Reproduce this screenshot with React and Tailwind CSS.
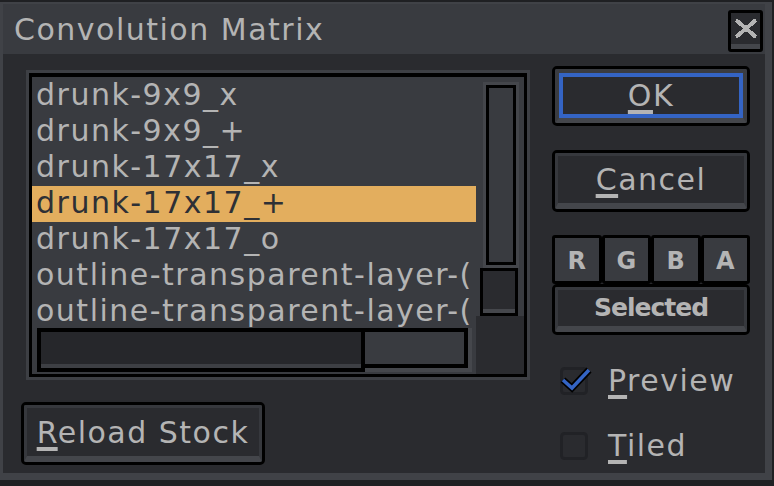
import React from 'react';

const items = [
  'drunk-9x9_x',
  'drunk-9x9_+',
  'drunk-17x17_x',
  'drunk-17x17_+',
  'drunk-17x17_o',
  'outline-transparent-layer-(',
  'outline-transparent-layer-(',
];

// first letter underline (mnemonic)
function U({ children }) {
  return <span className="underline decoration-[4px] underline-offset-[4px]">{children}</span>;
}

function Btn({ className = '', children }) {
  return (
    <div className={`rounded-[5px] border-[3px] border-black ${className}`}>
      <div className="flex h-full items-center justify-center rounded-[2px] border-[3px] border-b-[6px] border-[#36383d] border-b-[#44464b] bg-[#2a2b2f]">
        {children}
      </div>
    </div>
  );
}

function Channel({ label }) {
  return (
    <div className="flex-1 rounded-[3px] border-[3px] border-black bg-[#393b40] flex items-center justify-center">
      <span className="text-[24px] font-bold tracking-normal pt-[3px] leading-none">{label}</span>
    </div>
  );
}

function Check({ checked }) {
  return (
    <svg width="32" height="28" viewBox="0 0 32 28" className="shrink-0">
      <rect x="1.5" y="1.5" width="25" height="25" rx="3" fill="none" stroke="#212226" strokeWidth="3" />
      {checked && (
        <>
          <polyline points="3,13 12,21 29,3" fill="none" stroke="#000" strokeWidth="7" strokeLinejoin="miter" />
          <polyline points="3,13 12,21 29,3" fill="none" stroke="#3464c4" strokeWidth="3.5" strokeLinejoin="miter" />
        </>
      )}
    </svg>
  );
}

export default function App() {
  return (
    <div className="w-[774px] h-[486px] bg-[#1f2023] pt-[2px] pr-[2px] pb-[6px] font-['DejaVu_Sans',sans-serif] text-[30px] tracking-[1.5px] text-[#b4b4b4]">
      <div className="h-full flex flex-col border-l-[3px] border-r-[7px] border-b-[7px] border-t-[2px] border-[#404247] bg-[#2a2b2f]">
        {/* title bar */}
        <div className="h-[50px] shrink-0 bg-[#393b40] flex justify-between pl-[11px] pr-[2px]">
          <div className="self-center leading-none pt-[2px]">Convolution Matrix</div>
          <div className="mt-[6px] w-[35px] h-[42px] rounded-[3px] border-[3px] border-black">
            <div className="h-full flex items-center justify-center border-b-[5px] border-[#44464b] bg-[#2a2b2f]">
              <svg width="22" height="19" viewBox="0 0 22 19" shapeRendering="crispEdges">
                <path d="M1 1 L21 18 M21 1 L1 18" stroke="#b4b4b4" strokeWidth="4" />
              </svg>
            </div>
          </div>
        </div>

        {/* body */}
        <div className="flex flex-1 pl-[18px]">
          {/* left column */}
          <div className="w-[509px] flex flex-col">
            <div className="ml-[5px] mt-[16px] w-[504px] h-[310px] border-[3px] border-[#3d3f44]">
              <div className="h-full flex border-[3px] border-t-[4px] border-black bg-[#393b40]">
                <div className="w-[444px] flex flex-col">
                  <div className="h-[250px] overflow-x-clip pt-px">
                    {items.map((t, i) => (
                      <div
                        key={i}
                        className={`h-[36px] leading-[34px] pl-[4px] whitespace-nowrap ${i === 3 ? 'bg-[#e3ae5e] text-[#2e3035]' : ''}`}
                      >
                        {t}
                      </div>
                    ))}
                  </div>
                  <div className="flex-1 flex pl-[5px] pr-[4px] pt-px pb-[2px]">
                    <div className="w-[328px] border-[4px] border-black bg-[#26272b]">
                      <div className="h-full border-b-[4px] border-[#3d3f44]" />
                    </div>
                    <div className="flex-1 border-r-[4px] border-b-[4px] border-[#45474c]">
                      <div className="h-full border-[4px] border-l-0 border-black bg-[#393b40]" />
                    </div>
                  </div>
                </div>
                <div className="flex-1 flex flex-col">
                  <div className="ml-[7px] mt-[5px] w-[36px] h-[186px] border-[3px] border-[#44464b]">
                    <div className="h-full border-[3px] border-black bg-[#393b40]" />
                  </div>
                  <div className="ml-[4px] w-[38px] h-[48px] border-[3px] border-black bg-[#2a2b2f]">
                    <div className="h-full border-b-[4px] border-[#45474c]" />
                  </div>
                  <div className="flex-1 bg-[#2a2b2f]" />
                </div>
              </div>
            </div>
            <Btn className="mt-[22px] w-[244px] h-[63px]">
              <span><U>R</U>eload Stock</span>
            </Btn>
          </div>

          {/* right column */}
          <div className="ml-[22px] w-[198px] flex flex-col">
            <div className="mt-[12px] h-[60px] rounded-[5px] border-[3px] border-black">
              <div className="h-full rounded-[2px] border-[4px] border-b-[5px] border-[#3a3c41] border-b-[#44464b]">
                <div className="h-full flex items-center justify-center border-[4px] border-[#3464c4] bg-[#2a2b2f]">
                  <span><U>O</U>K</span>
                </div>
              </div>
            </div>
            <Btn className="mt-[24px] h-[62px]">
              <span><U>C</U>ancel</span>
            </Btn>
            <div className="mt-[23px] h-[49px] flex">
              <Channel label="R" />
              <Channel label="G" />
              <Channel label="B" />
              <Channel label="A" />
            </div>
            <Btn className="h-[51px]">
              <span className="text-[25px] font-bold tracking-[-1px]">Selected</span>
            </Btn>
            <div className="mt-[28px] h-[35px] flex items-center pl-[8px] gap-[16px]">
              <Check checked />
              <span><U>P</U>review</span>
            </div>
            <div className="mt-[30px] h-[35px] flex items-center pl-[8px] gap-[16px]">
              <Check />
              <span><U>T</U>iled</span>
            </div>
          </div>
        </div>
      </div>
    </div>
  );
}
